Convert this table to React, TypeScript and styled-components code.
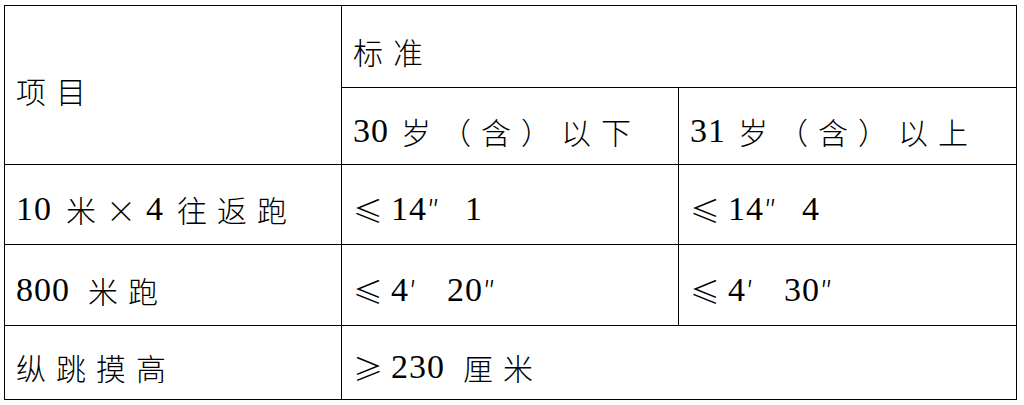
import React from "react";
import styled, { createGlobalStyle } from "styled-components";

const Global = createGlobalStyle`
  html, body { margin: 0; padding: 0; background: #fff; }
  body { width: 1024px; height: 405px; overflow: hidden; font-family: "Liberation Serif", "DejaVu Serif", serif; }
`;

const Table = styled.div`
  margin: 5px 0 0 4px;
  width: 1013px;
  display: grid;
  grid-template-columns: 336px 336px 337px;
  grid-template-rows: 81px 76px 79px 80px 73px;
  gap: 1px;
  padding: 1px;
  box-sizing: border-box;
  background: #000;
`;

const Cell = styled.div<{ $row: string; $col: string }>`
  grid-row: ${(p) => p.$row};
  grid-column: ${(p) => p.$col};
  background: #fff;
  display: flex;
  align-items: center;
  padding: 9px 0 0 11px;
  box-sizing: border-box;
  white-space: nowrap;
  color: #000;
`;

const Han = styled.span`
  font-family: "Noto Sans CJK SC", "Noto Sans CJK JP", sans-serif;
  font-weight: 300;
  font-size: 30px;
  letter-spacing: 10px;
  line-height: 1;
`;

const Num = styled.span<{ $gap?: number }>`
  font-family: "Liberation Serif", "Times New Roman", "DejaVu Serif", serif;
  font-size: 34px;
  letter-spacing: 1px;
  line-height: 1;
  margin-right: ${(p) => (p.$gap ?? 12)}px;
`;

const Mark = styled.span`
  display: inline-block;
  width: 38px;
  font-family: "Noto Sans CJK SC", sans-serif;
  font-weight: 300;
  font-size: 30px;
  line-height: 1;
`;

type Seg = { k: "h" | "n" | "m"; t: string; gap?: number };

const Text: React.FC<{ segs: Seg[] }> = ({ segs }) => (
  <>
    {segs.map((s, i) =>
      s.k === "h" ? (
        <Han key={i}>{s.t}</Han>
      ) : s.k === "m" ? (
        <Mark key={i}>{s.t}</Mark>
      ) : (
        <Num key={i} $gap={s.gap}>
          {s.t}
        </Num>
      )
    )}
  </>
);

const cells: { row: string; col: string; segs: Seg[] }[] = [
  { row: "1 / span 2", col: "1", segs: [{ k: "h", t: "项目" }] },
  { row: "1", col: "2 / span 2", segs: [{ k: "h", t: "标准" }] },
  { row: "2", col: "2", segs: [{ k: "n", t: "30" }, { k: "h", t: "岁（含）以下" }] },
  { row: "2", col: "3", segs: [{ k: "n", t: "31" }, { k: "h", t: "岁（含）以上" }] },
  {
    row: "3",
    col: "1",
    segs: [
      { k: "n", t: "10", gap: 14 },
      { k: "h", t: "米×" },
      { k: "n", t: "4", gap: 13 },
      { k: "h", t: "往返跑" },
    ],
  },
  {
    row: "3",
    col: "2",
    segs: [
      { k: "m", t: "≤" },
      { k: "n", t: "14", gap: 0 },
      { k: "m", t: "″" },
      { k: "n", t: "1" },
    ],
  },
  {
    row: "3",
    col: "3",
    segs: [
      { k: "m", t: "≤" },
      { k: "n", t: "14", gap: 0 },
      { k: "m", t: "″" },
      { k: "n", t: "4" },
    ],
  },
  { row: "4", col: "1", segs: [{ k: "n", t: "800", gap: 18 }, { k: "h", t: "米跑" }] },
  {
    row: "4",
    col: "2",
    segs: [
      { k: "m", t: "≤" },
      { k: "n", t: "4", gap: 0 },
      { k: "m", t: "′" },
      { k: "n", t: "20", gap: 0 },
      { k: "m", t: "″" },
    ],
  },
  {
    row: "4",
    col: "3",
    segs: [
      { k: "m", t: "≤" },
      { k: "n", t: "4", gap: 0 },
      { k: "m", t: "′" },
      { k: "n", t: "30", gap: 0 },
      { k: "m", t: "″" },
    ],
  },
  { row: "5", col: "1", segs: [{ k: "h", t: "纵跳摸高" }] },
  {
    row: "5",
    col: "2 / span 2",
    segs: [
      { k: "m", t: "≥" },
      { k: "n", t: "230", gap: 18 },
      { k: "h", t: "厘米" },
    ],
  },
];

export default function App() {
  return (
    <>
      <Global />
      <Table>
        {cells.map((c, i) => (
          <Cell key={i} $row={c.row} $col={c.col}>
            <Text segs={c.segs} />
          </Cell>
        ))}
      </Table>
    </>
  );
}
